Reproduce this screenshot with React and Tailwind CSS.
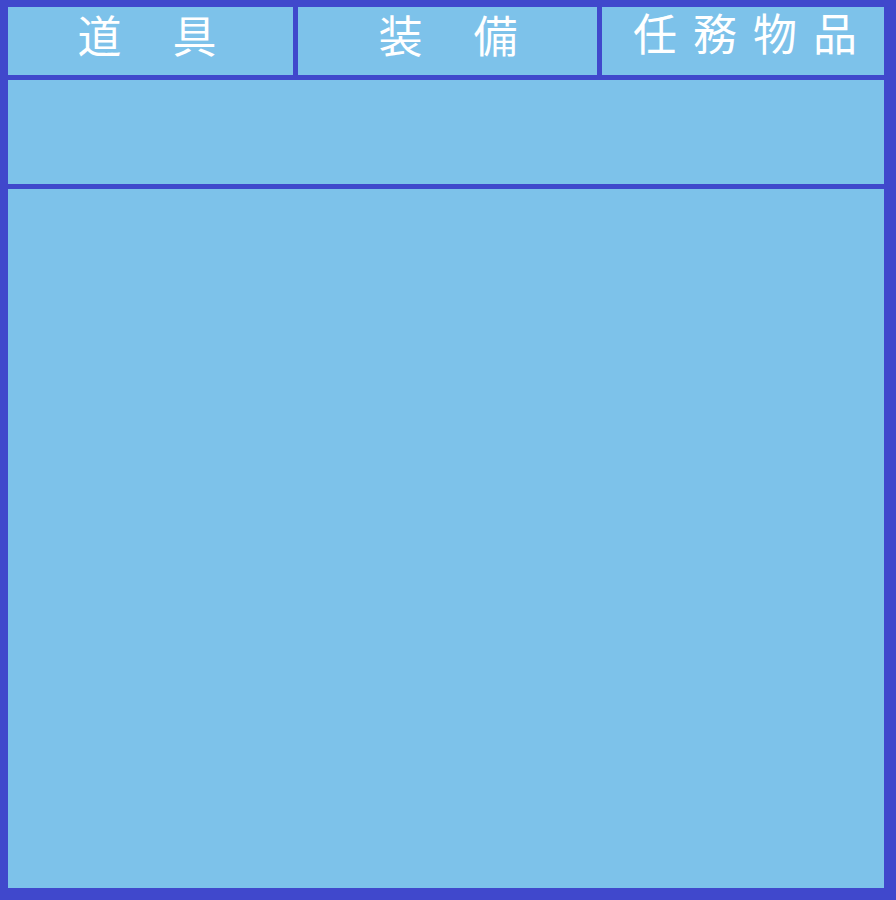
import React from 'react';

const tabs = [
    { label: '道 具', cls: 'w-[285px] pl-[9px] pt-[2px]' },
    { label: '装 備', cls: 'w-[299px] pl-[17px] pt-[2px]' },
    { label: '任務物品', cls: 'flex-1 pl-[20px]' },
];

const App = () => {
    return (
        <div className="w-[896px] h-[900px] bg-[#4048cc] pt-[7px] pl-[8px] pr-[12px] pb-[12px] flex flex-col gap-[5px]" style={{ fontFamily: '"Noto Sans CJK JP", "Noto Sans CJK TC", sans-serif' }}>
            <div className="flex h-[68px] gap-[5px]">
                {tabs.map((t) => (
                    <div key={t.label} className={`${t.cls} bg-[#7dc2ea] text-white text-[44px] leading-[50px] tracking-[16px] [word-spacing:9px] whitespace-pre text-center`}>
                        {t.label}
                    </div>
                ))}
            </div>
            <div className="h-[104px] bg-[#7dc2ea]"></div>
            <div className="flex-1 bg-[#7dc2ea]"></div>
        </div>
    );
};

export default App;
